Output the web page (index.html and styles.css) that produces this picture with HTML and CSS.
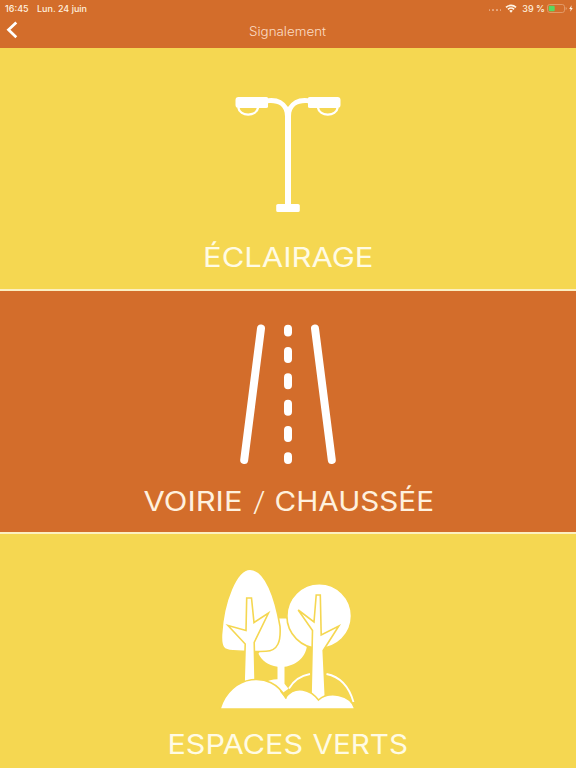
FILE: index.html
```html
<!DOCTYPE html>
<html lang="fr">
<head>
<meta charset="utf-8">
<title>Signalement</title>
<link rel="stylesheet" href="styles.css">
</head>
<body>
<header class="header">
  <div class="status">
    <span class="time">16:45</span>
    <span class="date">Lun. 24 juin</span>
    <span class="spacer"></span>
    <span class="signal"><i></i><i></i><i></i><i></i></span>
    <svg class="wifi" viewBox="0 0 12 9"><path d="M1 3.4a7.2 7.2 0 0 1 10 0M2.900 5.4a4.5 4.5 0 0 1 6.2 0" fill="none" stroke="#fff5e6" stroke-width="1.6"/><path d="M4.200 6.8a2.6 2.6 0 0 1 3.600 0L6 8.7z" fill="#fff5e6"/></svg>
    <span class="percent">39 %</span>
    <svg class="battery" viewBox="0 0 20 9"><rect x=".5" y=".5" width="17" height="8" rx="2.2" fill="none" stroke="#e6a577" stroke-width=".8"/><rect x="1.7" y="1.7" width="6" height="5.6" rx="1" fill="#58d860"/><path d="M18.7 3v3q1-.4 1-1.500t-1-1.500z" fill="#e6a577"/></svg>
    <svg class="bolt" viewBox="0 0 5 8"><path d="M3.200 0 .3 4.500h1.800L1.600 8l3-4.700H2.800z" fill="#fff5e6"/></svg>
  </div>
  <div class="navbar">
    <svg class="back" viewBox="0 0 12 18"><path d="M10.300 1.500 2.500 8.800l7.800 7.400" fill="none" stroke="#fff" stroke-width="2.700"/></svg>
    <h1 class="title"><svg width="80" height="20"><text x="1" y="14" textLength="77" lengthAdjust="spacingAndGlyphs">Signalement</text></svg></h1>
  </div>
</header>
<main>
  <section class="card yellow">
    <svg class="art" viewBox="218 48 140 190" fill="#fff">
      <path d="M238.300 107.500c1.400 9.400 18.400 9.400 19.800 0M317.900 107.500c1.400 9.400 18.400 9.400 19.800 0" fill="#f5d751" stroke="#fff" stroke-width="2.300"/>
      <path d="M238.500 97H266q2 0 2 1.200 8-.8 13 2 4.500 2.600 7 6.800 2.500-4.200 7-6.800 5-2.800 13-2 0-1.200 2-1.200h27.500q3 0 3 3v5q0 3-3 3H310q-2 0-2-1.200v-3.600c-9-.8-17 2-17 13V204h7q1.800 0 1.800 1.500v5q0 1.500-1.800 1.500h-20q-1.800 0-1.800-1.500v-5q0-1.500 1.800-1.500h7v-87.800c0-11-8-13.800-17-13v3.600q0 1.200-2 1.200h-27.500q-3 0-3-3v-5q0-3 3-3z"/>
    </svg>
    <svg class="label" viewBox="0 0 576 36"><text x="203" y="29" textLength="170.500" lengthAdjust="spacingAndGlyphs">ÉCLAIRAGE</text></svg>
  </section>
  <section class="card orange">
    <svg class="art" viewBox="218 291 140 190" fill="none" stroke="#fff" stroke-width="8" stroke-linecap="round">
      <path d="M261 328.500 244.200 460M315 328.500 331.800 460M288 328.800v3.800M288 351v8M288 377.200v8M288 403.700v8M288 430v8M288 456.200v3.800"/>
    </svg>
    <svg class="label" viewBox="0 0 576 36"><text x="143.500" y="29.500" textLength="99" lengthAdjust="spacingAndGlyphs">VOIRIE</text><text class="slash" x="252.500" y="29.500" textLength="13" lengthAdjust="spacingAndGlyphs">/</text><text x="274.500" y="29.500" textLength="159.500" lengthAdjust="spacingAndGlyphs">CHAUSSÉE</text></svg>
  </section>
  <section class="card yellow">
    <svg class="art" viewBox="218 534 140 190" fill="#fff">
      <path d="M277 618.500h9c12 4 21 14 21 25 0 13-10 21.500-22.500 23.300v17l4 5-7 5-17-11q5-3.500 13-3.500v-12.500c-10-1.500-15.500-6-19-13z"/>
      <path d="M250 569.300c16 0 25.500 30 30 57 1 15-2 24.500-14 25-11 .5-22 .5-33-.5-10 0-12-4-11.500-16 2-34 15-65.500 28.500-65.500z" stroke="#f5d751" stroke-width="1.600"/>
      <circle cx="319.200" cy="616" r="32.300" stroke="#f5d751" stroke-width="1.600"/>
      <path d="M289 688.500q7-12 21-14.500M326.500 674q20 4 27 28" fill="none" stroke="#fff" stroke-width="1.800"/>
      <path d="m244 685 1.200-41-17.200-18.500 18 5 .7-32.500h4.800l2.500 24.500 14.500-9.500-14.300 29.500 1 42.500" stroke="#f5d751" stroke-width="1.600"/>
      <path d="m316.200 595-2.200 27-15.800-12 14.300 20.500-1.500 66 6.500 7 8-4-2.300-49 15.600-24.500-17.600 9-.9-40z" stroke="#f5d751" stroke-width="1.600"/>
      <path d="M220 709c10-35 52-39 65.500-11.500 10-13 25-8 33 2.500 10-9 32-6 36.500 9z" stroke="#f5d751" stroke-width="1.600"/>
      <path d="M280.500 691q4 5 6 7.500" fill="none" stroke="#f5d751" stroke-width="1.400"/>
    </svg>
    <svg class="label" viewBox="0 0 576 36"><text x="167.500" y="30" textLength="135.500" lengthAdjust="spacingAndGlyphs">ESPACES</text><text x="312.500" y="30" textLength="95.500" lengthAdjust="spacingAndGlyphs">VERTS</text></svg>
  </section>
</main>
</body>
</html>
```
FILE: styles.css
```css
* { box-sizing: border-box; }
body { margin: 0; width: 576px; height: 768px; overflow: hidden; background: #f5d751; font-family: Inter, "Liberation Sans", sans-serif; }
svg { display: block; }
.header { height: 48px; background: #d36d2b; color: #fff0df; }
.status { display: flex; align-items: center; height: 16px; padding: 0 3px 0 5px; font-size: 9px; font-weight: 500; }
.time { width: 32px; }
.date { white-space: nowrap; }
.spacer { flex: 1; }
.signal { display: flex; gap: 2px; margin: 4px 4px 0 0; }
.signal i { width: 1.700px; height: 1.700px; border-radius: 50%; background: #e9aa80; }
.wifi { width: 12px; height: 9px; margin-right: 5px; }
.percent { white-space: nowrap; margin-right: 2px; }
.battery { width: 20px; height: 9px; margin-right: 2px; }
.bolt { width: 4px; height: 7px; }
.navbar { display: grid; grid-template-columns: 30px 1fr 30px; height: 32px; }
.back { width: 12px; height: 18px; margin: 5px 0 0 6px; }
.title { display: flex; justify-content: center; margin: 6px 0 0; font-weight: 300; font-size: 12.500px; }
.title text { fill: #fbdcc4; }
.card { display: flex; flex-direction: column; align-items: center; height: 243px; border-bottom: 2px solid #fcefc0; }
.yellow { background: #f5d751; }
.orange { background: #d36d2b; }
.art { width: 140px; height: 190px; flex: none; }
.label { width: 576px; height: 36px; flex: none; overflow: visible; font-size: 26.500px; font-weight: 400; fill: #fffbe4; }
.orange .label { fill: #fff1de; }
.slash { font-weight: 200; }
```
